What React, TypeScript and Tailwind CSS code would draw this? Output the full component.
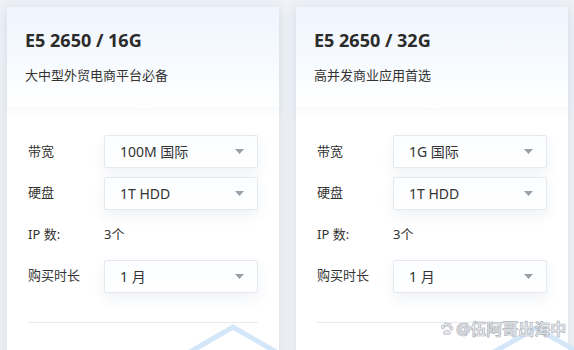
import { useState } from "react";

type Plan = {
  title: string;
  desc: string;
  bandwidth: string;
};

const plans: Plan[] = [
  { title: "E5 2650 / 16G", desc: "大中型外贸电商平台必备", bandwidth: "100M 国际" },
  { title: "E5 2650 / 32G", desc: "高并发商业应用首选", bandwidth: "1G 国际" },
];

function Caret() {
  return (
    <svg width="9" height="5" viewBox="0 0 9 5" className="shrink-0">
      <path d="M0 0 L9 0 L4.5 5 Z" fill="#9a9ea6" />
    </svg>
  );
}

function FakeSelect({ value }: { value: string }) {
  return (
    <div className="flex h-[33px] w-[154px] items-center justify-between rounded-[2px] border border-[#e4e8ef] bg-gradient-to-b from-[#fbfdff] to-white pl-[15px] pr-[13px] text-[14px] text-[#333] shadow-[0_6px_14px_rgba(40,70,120,0.07)]">
      <span>{value}</span>
      <Caret />
    </div>
  );
}

function Row({ label, children }: { label: string; children: React.ReactNode }) {
  return (
    <div className="flex h-[33px] items-center">
      <div className="w-[76px] text-[13px] text-[#333]">{label}</div>
      {children}
    </div>
  );
}

function PlanCard({ plan }: { plan: Plan }) {
  const [duration] = useState("1 月");
  return (
    <div className="flex h-[400px] w-[272px] flex-col bg-white shadow-[0_2px_12px_rgba(60,90,140,0.10)]">
      <div className="relative z-10 h-[100px] bg-gradient-to-b from-[#eef5fd] to-white pl-[18px] pt-[22px] shadow-[0_3px_8px_rgba(60,90,140,0.05)]">
        <div className="text-[18px] font-bold leading-[23px] text-[#2b2b2b]">{plan.title}</div>
        <div className="mt-[14px] text-[13px] leading-[18px] text-[#333]">{plan.desc}</div>
        <div className="absolute bottom-[-1px] left-[130px] h-0 w-0 border-x-[7px] border-b-[7px] border-x-transparent border-b-white" />
      </div>
      <div className="flex flex-col gap-[8.5px] px-[21px] pt-[28px]">
        <Row label="带宽">
          <FakeSelect value={plan.bandwidth} />
        </Row>
        <Row label="硬盘">
          <FakeSelect value="1T HDD" />
        </Row>
        <Row label="IP 数:">
          <span className="text-[13px] text-[#333]">3个</span>
        </Row>
        <Row label="购买时长">
          <FakeSelect value={duration} />
        </Row>
      </div>
      <div className="mx-[21px] mt-[29px] border-t border-[#e6e9ef]" />
    </div>
  );
}

function Paw() {
  return (
    <svg width="14" height="14" viewBox="0 0 14 14">
      <g fill="#e4e6ea" stroke="#b5bac2" strokeWidth="0.8">
        <ellipse cx="3" cy="5" rx="1.6" ry="2" />
        <ellipse cx="6" cy="2.8" rx="1.6" ry="2" />
        <ellipse cx="9.5" cy="3.2" rx="1.6" ry="2" />
        <ellipse cx="11.5" cy="6.5" rx="1.5" ry="1.8" />
        <path d="M3.5 11 C4 7.5 9 7 10.5 10.5 C11 12.5 8.5 12.5 7 12 C5.5 12.8 3 12.8 3.5 11 Z" />
      </g>
    </svg>
  );
}

export default function App() {
  return (
    <div
      className="relative h-[350px] w-[574px] overflow-hidden bg-[#eef1f6]"
      style={{ fontFamily: '"Noto Sans", "Noto Sans CJK SC", sans-serif' }}
    >
      <div className="flex gap-[17px] pl-[7px] pt-[7px]">
        {plans.map((p) => (
          <PlanCard key={p.title} plan={p} />
        ))}
      </div>

      <svg
        className="pointer-events-none absolute left-0 top-0"
        width="574"
        height="350"
        viewBox="0 0 574 350"
      >
        <path d="M190 352 L233 327 L276 352" fill="none" stroke="#d4e7f9" strokeWidth="5" />
        <path d="M494 352 L536 328 L578 352" fill="none" stroke="#d4e7f9" strokeWidth="5" />
      </svg>

      <div className="pointer-events-none absolute left-[440px] top-[319px] flex items-center gap-[2px]">
        <Paw />
        <span
          className="text-[16px] font-bold leading-[20px] text-[#eceef1]"
          style={{ WebkitTextStroke: "0.7px #aeb3bb" }}
        >
          @伍阿哥出海中
        </span>
      </div>
    </div>
  );
}
